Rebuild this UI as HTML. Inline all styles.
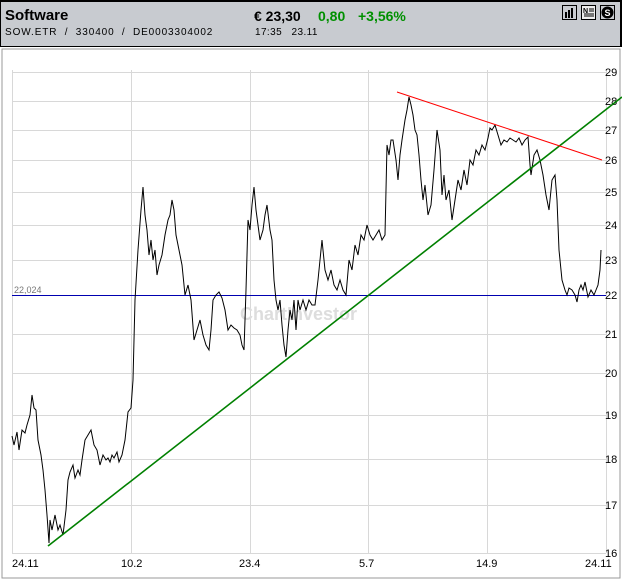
<!DOCTYPE html>
<html><head><style>
body{margin:0;width:622px;height:587px;background:#fff;overflow:hidden;font-family:"Liberation Sans",sans-serif;position:relative}
#hd{position:absolute;left:0;top:0;width:619px;height:44px;background:#c8cbd0;border:1px solid #000;border-top:2px solid #000;border-right:2px solid #000}
.t{position:absolute;white-space:nowrap}
</style></head><body>
<div id="hd"></div>
<div class="t" style="left:5px;top:7px;font-size:15px;font-weight:bold">Software</div>
<div class="t" style="left:5px;top:27px;font-size:10px;letter-spacing:0.9px">SOW.ETR &nbsp;/ &nbsp;330400 &nbsp;/ &nbsp;DE0003304002</div>
<div class="t" style="left:254px;top:8px;font-size:14px;font-weight:bold">€ 23,30</div>
<div class="t" style="left:318px;top:8px;font-size:14px;font-weight:bold;color:#009000">0,80</div>
<div class="t" style="left:358px;top:8px;font-size:14px;font-weight:bold;color:#009000">+3,56%</div>
<div class="t" style="left:255px;top:27px;font-size:10px;letter-spacing:0.4px">17:35 &nbsp;&nbsp;23.11</div>
<svg style="position:absolute;left:0;top:0" width="622" height="587">
<rect x="562.5" y="5.5" width="14" height="14" fill="#c8cbd0" stroke="#000"/>
<rect x="565" y="12" width="2" height="6"/><rect x="568" y="10" width="2" height="8"/><rect x="571" y="8" width="2" height="10"/>
<rect x="581.5" y="5.5" width="14" height="14" fill="#eee" stroke="#000"/>
<text x="583" y="13" font-size="7" font-family="Liberation Sans" font-weight="bold">N</text>
<path d="M589 9h5M589 11h5M584 14h10M584 16h10" stroke="#000"/>
<rect x="600.5" y="5.5" width="14" height="14" fill="#c8cbd0" stroke="#000"/>
<circle cx="607.5" cy="12.5" r="6" fill="#000"/>
<text x="604.5" y="16" font-size="9" font-weight="bold" fill="#fff" font-family="Liberation Sans">S</text>
<rect x="2" y="49" width="618" height="529" fill="#fff" stroke="#999" stroke-width="1"/>
<g stroke="#d8d8d8" stroke-width="1">
<path d="M12.5 70V553M131.5 70V553M250.5 70V553M368.5 70V553M487.5 70V553M606.5 70V553"/>
<path d="M12 72.5H606M12 101.5H606M12 130.5H606M12 160.5H606M12 192.5H606M12 225.5H606M12 260.5H606M12 334.5H606M12 373.5H606M12 415.5H606M12 459.5H606M12 505.5H606M12 553.5H606"/>
</g>
<g font-family="Liberation Sans" font-size="11" fill="#000">
<text x="605" y="76">29</text><text x="605" y="105">28</text><text x="605" y="134">27</text><text x="605" y="164">26</text><text x="605" y="196">25</text><text x="605" y="229">24</text><text x="605" y="264">23</text><text x="605" y="299">22</text><text x="605" y="338">21</text><text x="605" y="377">20</text><text x="605" y="419">19</text><text x="605" y="463">18</text><text x="605" y="509">17</text><text x="605" y="557">16</text>
<text x="12" y="567">24.11</text><text x="121" y="567">10.2</text><text x="239" y="567">23.4</text><text x="359" y="567">5.7</text><text x="476" y="567">14.9</text><text x="585" y="567">24.11</text>
</g>
<text x="240" y="320" font-family="Liberation Sans" font-size="18" font-weight="bold" fill="#ddd">ChartInvestor</text>
<text x="14" y="293" font-family="Liberation Sans" font-size="9" fill="#777">22,024</text>
<path d="M12 295.5H606" stroke="#0000b0" stroke-width="1"/>
<polyline fill="none" stroke="#000" stroke-width="1" points="12,436 14,445 17,432 19,450 22,430 25,433 27,425 30,415 32,395 34,408 36,410 38,440 41,455 43,470 45,490 47,515 49,543 50,520 52,530 55,515 58,530 60,525 63,535 66,510 68,480 70,472 73,465 75,478 78,470 80,475 82,460 85,440 88,435 91,430 94,445 97,450 100,465 103,455 106,460 108,458 110,462 112,455 114,458 117,452 119,462 122,455 125,440 128,412 131,408 133,380 135,300 138,250 141,210 143,187 145,215 147,230 149,255 151,240 153,260 155,250 157,275 159,265 162,255 165,235 168,220 170,215 172,200 174,210 176,235 179,250 182,265 185,295 188,285 191,300 194,340 197,330 200,320 203,335 206,345 209,350 211,330 213,300 216,295 219,292 222,298 225,310 228,330 231,325 234,328 237,330 240,335 242,345 244,350 246,290 248,220 250,230 252,205 254,187 256,210 258,225 260,240 263,230 265,215 267,205 270,230 272,240 274,280 276,300 278,310 280,300 282,325 284,345 286,357 288,330 290,310 292,320 294,300 296,330 298,300 300,310 303,300 306,310 309,300 312,305 315,305 318,280 320,260 322,240 325,270 328,280 331,270 334,285 337,290 340,280 343,290 346,295 349,260 352,270 355,245 358,255 361,235 364,240 367,225 370,235 373,240 376,235 379,230 382,240 385,235 387,145 389,155 391,140 393,140 396,160 398,180 400,155 402,140 405,120 407,110 409,97 411,105 413,115 415,130 417,135 419,155 421,180 423,200 425,185 428,215 431,205 434,170 437,130 440,150 442,195 444,175 446,200 449,190 452,220 455,200 458,180 461,190 464,170 467,185 470,160 473,165 476,150 479,155 482,145 485,150 488,138 490,128 492,130 495,125 498,135 501,145 504,140 507,142 510,138 513,140 516,142 519,138 522,145 525,140 528,137 530,165 531,175 534,155 537,150 540,160 543,175 546,195 549,210 552,180 555,175 557,200 559,250 562,280 565,290 567,295 569,288 572,290 575,295 577,302 579,290 581,285 583,290 585,282 588,297 591,290 594,295 596,290 598,285 600,270 601,250"/>
<path d="M48 546L622 97" stroke="#008000" stroke-width="1.6" fill="none"/>
<path d="M397 92L602 160" stroke="#ff0000" stroke-width="1" fill="none"/>
</svg>
</body></html>
